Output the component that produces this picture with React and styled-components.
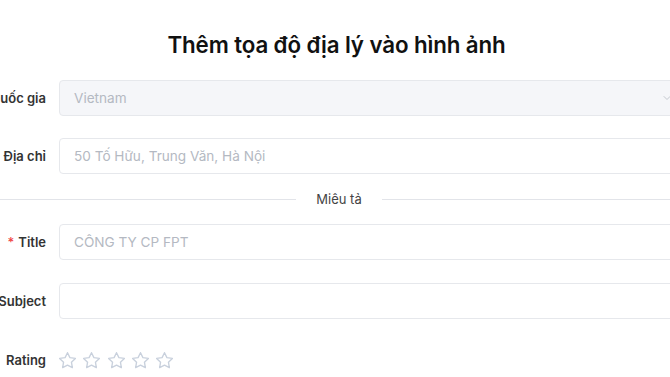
import React from 'react'
import styled, { createGlobalStyle } from 'styled-components'

const Global = createGlobalStyle`
  html, body {
    margin: 0;
    padding: 0;
    background: #ffffff;
    overflow: hidden;
  }
  body {
    font-family: Inter, "Noto Sans", sans-serif;
    color: #262626;
  }
  * { box-sizing: border-box; }
`

const Modal = styled.div`
  width: 720px;
  margin-left: -20px;
  padding: 30px 12px 0 0;
`

const Heading = styled.h2`
  margin: 0 0 20px;
  padding-left: 5px;
  text-align: center;
  font-size: 22.3px;
  line-height: 30px;
  font-weight: 600;
  color: #111;
  letter-spacing: -0.1px;
`

const Form = styled.div`
  display: flex;
  flex-direction: column;
`

const Row = styled.div`
  display: flex;
  align-items: center;
  gap: 13px;
  margin-bottom: ${(p) => p.$mb ?? 22}px;
`

const Label = styled.label`
  width: 66px;
  flex-shrink: 0;
  display: flex;
  justify-content: flex-end;
  white-space: nowrap;
  font-size: 13px;
  font-weight: 600;
  color: #333;
`

const Required = styled.span`
  color: #ef4444;
  margin-right: 4px;
  font-weight: 500;
`

const Field = styled.div`
  flex: 1;
  height: 36px;
  display: flex;
  align-items: center;
  justify-content: space-between;
  padding: 0 14px;
  border: 1px solid #e6e8ec;
  border-radius: 4px;
  background: ${(p) => (p.$disabled ? '#f5f6f9' : '#fff')};
  font-size: 13.6px;
  color: #b4b9c2;
`

const Divider = styled.div`
  display: flex;
  align-items: center;
  gap: 20px;
  height: 16px;
  margin: 0 0 17px 10px;
  font-size: 13px;
  color: #444;
  &::before,
  &::after {
    content: '';
    flex: 1;
    height: 1px;
    background: #e2e4e9;
  }
`

const Stars = styled.div`
  height: 36px;
  display: flex;
  align-items: center;
  gap: 7.3px;
`

const Star = () => (
  <svg width="17" height="17" viewBox="2 2 20 20" fill="none" stroke="#c9d1dd" strokeWidth="1.6" strokeLinejoin="round">
    <path d="M12 2.8l2.85 5.8 6.4.93-4.63 4.5 1.1 6.37L12 17.4l-5.72 3 1.1-6.37-4.63-4.5 6.4-.93z" />
  </svg>
)

const Chevron = () => (
  <svg width="12" height="12" viewBox="0 0 24 24" fill="none" stroke="#c4c8cf" strokeWidth="2" strokeLinecap="round" strokeLinejoin="round">
    <path d="M6 9l6 6 6-6" />
  </svg>
)

export default function App() {
  return (
    <>
      <Global />
      <Modal>
        <Heading>Thêm tọa độ địa lý vào hình ảnh</Heading>
        <Form>
          <Row>
            <Label>Quốc gia</Label>
            <Field $disabled>
              <span>Vietnam</span>
              <Chevron />
            </Field>
          </Row>
          <Row $mb={17}>
            <Label>Địa chỉ</Label>
            <Field>50 Tố Hữu, Trung Văn, Hà Nội</Field>
          </Row>
          <Divider>Miêu tả</Divider>
          <Row $mb={23}>
            <Label>
              <Required>*</Required>Title
            </Label>
            <Field>CÔNG TY CP FPT</Field>
          </Row>
          <Row $mb={23}>
            <Label>Subject</Label>
            <Field />
          </Row>
          <Row>
            <Label>Rating</Label>
            <Stars>
              <Star />
              <Star />
              <Star />
              <Star />
              <Star />
            </Stars>
          </Row>
        </Form>
      </Modal>
    </>
  )
}
